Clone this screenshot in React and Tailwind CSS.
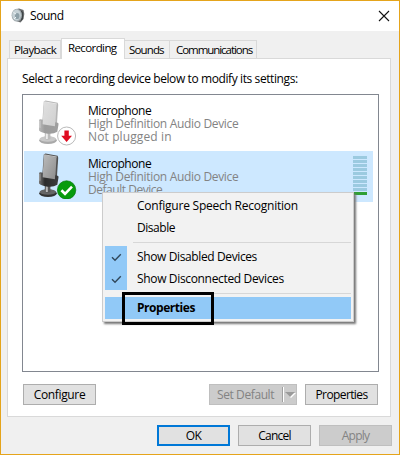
import React from "react";

function Microphone({ id, dim, children }) {
  return (
    <svg width="44" height="48" viewBox="0 0 44 48" className="block shrink-0">
      <defs>
        <linearGradient id={`${id}-body`} x1="0" y1="0" x2="1" y2="1">
          <stop offset="0" stopColor={dim ? "#e0e0e0" : "#bcbcbc"} />
          <stop offset="1" stopColor={dim ? "#cfcfcf" : "#8a8a8a"} />
        </linearGradient>
        <linearGradient id={`${id}-band`} x1="0" y1="0" x2="1" y2="0">
          <stop offset="0" stopColor={dim ? "#b9b9b9" : "#777"} />
          <stop offset="0.3" stopColor={dim ? "#9c9c9c" : "#2c2c2c"} />
          <stop offset="1" stopColor={dim ? "#a0a0a0" : "#3d3d3f"} />
        </linearGradient>
      </defs>
      <ellipse cx="13" cy="42.3" rx="8.8" ry="3.7" fill={dim ? "#a9a9a9" : "#333"} />
      <ellipse cx="12.8" cy="41" rx="8.2" ry="2.8" fill={dim ? "#c9c9c9" : "#666"} />
      <path d="M9.8 33h5.6v8q-2.8 1.6-5.6 0z" fill={dim ? "#bbb" : "#555"} />
      <path d="M10.8 33h2v8h-2z" fill={dim ? "#ececec" : "#bbb"} />
      <path d="M8.8 3.6 10.5 2.4 22.6 4.8 23.2 6.8 21.6 31 7 28z" fill={dim ? "#b5b5b5" : "#505050"} />
      <path d="M9.1 4.1 21.5 6.4 20.1 30 7.4 27.5z" fill={`url(#${id}-body)`} />
      <path d="M9.2 3.8 21.8 6" stroke={dim ? "#f3f3f3" : "#dedede"} strokeWidth=".8" />
      <path d="M4 22.6q0-1.6 1.7-1.3l2.1.4-.3 4.6 12.4 2 .4-4 2.4.5q1 .3.8 1.8l-1.2 7.2q-4 2.6-9.5 1.9-6-.7-8.8-3.2z" fill={`url(#${id}-band)`} />
      <path d="M4.9 22.8v7" stroke={dim ? "#d4d4d4" : "#a7a7a7"} strokeWidth="1" />
      {children}
    </svg>
  );
}

function SpeakerIcon() {
  return (
    <svg width="14" height="16" viewBox="0 0 14 16" className="block">
      <path d="M4 1.5 8 .5 12.5 2 13.3 6 12.5 11 9.5 14.5 5 13z" fill="#686b6c" />
      <path d="M10 2.5 12 4v7l-2 2z" fill="#3e4446" />
      <ellipse cx="5.8" cy="7.2" rx="5.2" ry="6.4" fill="#a2abaf" />
      <ellipse cx="5.5" cy="7" rx="4.3" ry="5.4" fill="#c5d1d6" />
      <ellipse cx="6.2" cy="8" rx="2.3" ry="3.1" fill="#8ea0a8" />
      <path d="M2.5 4.5 5 6M3 11l2-2" stroke="#eef4f6" strokeWidth="1" />
    </svg>
  );
}

function Check() {
  return (
    <svg width="11" height="9" viewBox="0 0 11 9" className="block">
      <path d="M1 4.2 4 7.2 9.8 1.2" fill="none" stroke="#30475a" strokeWidth="1.4" />
    </svg>
  );
}

function Tab({ children, className }) {
  return (
    <div className={`flex h-[18px] items-center border-t border-r border-[#d9d9d9] bg-[#f0f0f0] whitespace-nowrap ${className}`}>
      {children}
    </div>
  );
}

function Button({ children, className }) {
  return (
    <div className={`flex h-[21px] w-[73px] items-center justify-center whitespace-nowrap ${className}`}>
      {children}
    </div>
  );
}

function DeviceText({ children }) {
  return (
    <div className="ml-[9px] pt-[6px] leading-[13px] whitespace-nowrap text-[#838383]">
      <div className="text-black tracking-[-0.45px]">Microphone</div>
      <div className="tracking-[-0.32px]">High Definition Audio Device</div>
      {children}
    </div>
  );
}

function MenuItem({ children, checked, className = "" }) {
  return (
    <div className={`flex h-[22px] items-center whitespace-nowrap ${className}`}>
      <div className={`flex h-full w-[22px] items-center justify-center ${checked ? "bg-[#91c9f7]" : ""}`}>
        {checked && <Check />}
      </div>
      <div className="ml-[10px]">{children}</div>
    </div>
  );
}

const bars = [0, 1, 2, 3, 4, 5, 6, 7, 8];

export default function App() {
  return (
    <div className="relative flex h-[455px] w-[400px] flex-col overflow-hidden border border-[#e5a41b] bg-[#f0f0f0] font-['Open_Sans','Noto_Sans',sans-serif] text-[12px] leading-[16px] text-black">
      <header className="flex h-[30px] shrink-0 items-center justify-between bg-white pr-[9px] pl-[10px]">
        <div className="flex items-center gap-[5px]">
          <SpeakerIcon />
          <span className="tracking-[-0.45px]">Sound</span>
        </div>
        <svg width="12" height="12" viewBox="0 0 12 12">
          <path d="M1 1 11 11M11 1 1 11" stroke="#111" strokeWidth="1.1" />
        </svg>
      </header>

      <nav className="flex h-[27px] shrink-0 items-end pl-[8px] text-[11.5px]">
        <Tab className="w-[52px] border-l pl-[4px] tracking-[-0.6px]">Playback</Tab>
        <div className="z-10 -mb-px flex h-[21px] w-[64px] items-center border border-b-0 border-[#d9d9d9] bg-white pb-[2px] pl-[6px] tracking-[-0.6px]">
          Recording
        </div>
        <Tab className="w-[45px] pl-[4px] tracking-[-0.85px]">Sounds</Tab>
        <Tab className="w-[87px] pl-[6px] tracking-[-1.05px]">Communications</Tab>
      </nav>

      <main className="ml-[6px] flex h-[359px] w-[384px] shrink-0 flex-col border border-[#d9d9d9] bg-white pr-[11px] pl-[14px]">
        <div className="flex h-[35px] items-center pt-[4px] whitespace-nowrap tracking-[-0.4px]">
          Select a recording device below to modify its settings:
        </div>
        <section className="h-[278px] w-[357px] border border-[#828790] bg-white pt-[3px] pl-[1px]">
          <div className="flex h-[53px] w-[349px] pl-[11px]">
            <Microphone id="unplugged" dim>
              <circle cx="31.6" cy="38" r="9" fill="#fff" stroke="#bababa" />
              <path d="M29.4 32.5h4.4v5.2h3.2L31.6 44l-5.4-6.3h3.2z" fill="#df0b20" />
            </Microphone>
            <DeviceText><div className="tracking-[0.12px]">Not plugged in</div></DeviceText>
          </div>
          <div className="flex h-[51px] w-[349px] bg-[#cde8ff] pl-[11px]">
            <Microphone id="default">
              <circle cx="31.6" cy="39" r="9.2" fill="#079b0d" stroke="#08790d" strokeWidth=".7" />
              <path d="M26.4 39.3 30 42.8 37 35.7" fill="none" stroke="#fff" strokeWidth="2.6" />
            </Microphone>
            <DeviceText><div className="tracking-[-0.47px]">Default Device</div></DeviceText>
            <div className="mt-[5px] mr-[6px] ml-auto flex w-[14px] flex-col gap-px">
              {bars.map((bar) => (
                <div key={bar} className="h-[3px] bg-[#9bcae0]" />
              ))}
              <div className="h-[3px] bg-[#2f9f34]" />
            </div>
          </div>
        </section>
        <div className="mt-[12px] flex pl-px">
          <Button className="border border-[#adadad] bg-[#e1e1e1] tracking-[-0.35px]">Configure</Button>
          <div className="ml-[113px] flex h-[21px] w-[88px] items-center border border-[#bfbfbf] bg-[#cccccc] pl-[7px] whitespace-nowrap text-[#838383]">
            <span className="w-[65px] tracking-[-0.4px]">Set Default</span>
            <span className="h-[15px] w-[2px] border-r border-l border-r-white border-l-[#a0a0a0]" />
            <svg width="11" height="7" viewBox="0 0 11 7" className="ml-[1px]">
              <path d="M1 1h10L6 6z" fill="#fff" transform="translate(0 1)" />
              <path d="M0 1h10L5 6z" fill="#9a9a9a" />
            </svg>
          </div>
          <Button className="ml-[8px] border border-[#adadad] bg-[#e1e1e1] tracking-[-0.6px]">Properties</Button>
        </div>
      </main>

      <footer className="mt-[8px] flex gap-[8px] pl-[156px]">
        <Button className="border-2 border-[#0078d7] bg-[#e1e1e1] tracking-[-0.6px]">OK</Button>
        <Button className="border border-[#adadad] bg-[#e1e1e1] tracking-[-0.75px]">Cancel</Button>
        <Button className="border border-[#bfbfbf] bg-[#cccccc] text-[#838383] tracking-[-0.8px]">Apply</Button>
      </footer>

      <div className="absolute top-[191px] left-[101px] z-20 h-[130px] w-[252px] border border-[#cccccc] bg-[#f2f2f2] p-[2px] shadow-[2px_2px_2px_#777]">
        <MenuItem><span className="tracking-[-0.23px]">Configure Speech Recognition</span></MenuItem>
        <MenuItem><span className="tracking-[-0.45px]">Disable</span></MenuItem>
        <div className="mt-[3px] mb-[3px] ml-[28px] h-px bg-[#d7d7d7]" />
        <MenuItem checked><span className="tracking-[-0.38px]">Show Disabled Devices</span></MenuItem>
        <MenuItem checked><span className="tracking-[-0.34px]">Show Disconnected Devices</span></MenuItem>
        <div className="mt-[3px] mb-[3px] ml-[28px] h-px bg-[#d7d7d7]" />
        <MenuItem className="bg-[#91c9f7] font-bold"><span className="tracking-[-0.45px]">Properties</span></MenuItem>
      </div>
      <div className="absolute top-[291px] left-[121px] z-30 h-[33px] w-[92px] border-3 border-black" />
    </div>
  );
}
